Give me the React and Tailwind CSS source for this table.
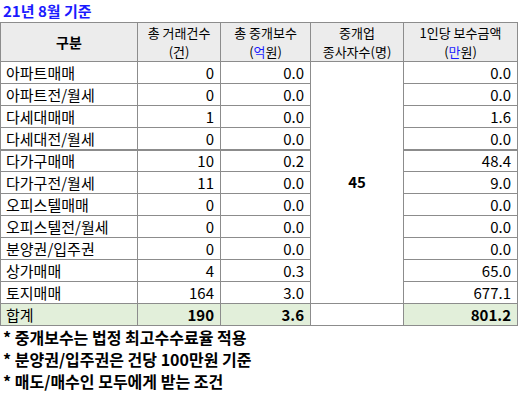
import React from "react";

const rows = [
  { name: "아파트매매", count: "0", fee: "0.0", per: "0.0" },
  { name: "아파트전/월세", count: "0", fee: "0.0", per: "0.0" },
  { name: "다세대매매", count: "1", fee: "0.0", per: "1.6" },
  { name: "다세대전/월세", count: "0", fee: "0.0", per: "0.0", thick: true },
  { name: "다가구매매", count: "10", fee: "0.2", per: "48.4" },
  { name: "다가구전/월세", count: "11", fee: "0.0", per: "9.0" },
  { name: "오피스텔매매", count: "0", fee: "0.0", per: "0.0" },
  { name: "오피스텔전/월세", count: "0", fee: "0.0", per: "0.0" },
  { name: "분양권/입주권", count: "0", fee: "0.0", per: "0.0" },
  { name: "상가매매", count: "4", fee: "0.3", per: "65.0" },
  { name: "토지매매", count: "164", fee: "3.0", per: "677.1" },
];

const notes = [
  "* 중개보수는 법정 최고수수료율 적용",
  "* 분양권/입주권은 건당 100만원 기준",
  "* 매도/매수인 모두에게 받는 조건",
];

export default function App() {
  const cell = "border border-[#8c8c8c] h-[22px] px-[5px] leading-none";
  const head = "border border-[#8c8c8c] p-0 text-[13px] font-normal leading-[19px]";

  return (
    <div className="w-[519px] h-[394px] bg-white text-black font-['Noto_Sans_CJK_KR',sans-serif]">
      {/* 제목 */}
      <div className="h-[22px] pl-[3px] pt-[1px] text-[15px] font-bold leading-[20px] text-[#1a1aff]">
        21년 8월 기준
      </div>

      {/* 표 */}
      <table className="border-collapse table-fixed w-[517px] text-[15px]">
        <colgroup>
          <col className="w-[137px]" />
          <col className="w-[83px]" />
          <col className="w-[90px]" />
          <col className="w-[93px]" />
          <col className="w-[114px]" />
        </colgroup>
        <thead>
          <tr className="bg-[#ececec] h-[38px]">
            <th className="border border-[#8c8c8c] p-0 text-[14px] font-bold">구분</th>
            <th className={head}>
              <div>총 거래건수</div>
              <div>(건)</div>
            </th>
            <th className={head}>
              <div>총 중개보수</div>
              <div>
                (<span className="text-[#1a1aff]">억</span>원)
              </div>
            </th>
            <th className={head}>
              <div>중개업</div>
              <div>종사자수(명)</div>
            </th>
            <th className={head}>
              <div>1인당 보수금액</div>
              <div>
                (<span className="text-[#1a1aff]">만</span>원)
              </div>
            </th>
          </tr>
        </thead>
        <tbody>
          {rows.map((r, i) => (
            <tr key={r.name} className={r.thick ? "border-b-2 border-[#8c8c8c]" : ""}>
              <td className={`${cell} text-left`}>{r.name}</td>
              <td className={`${cell} text-right pr-[6px]`}>{r.count}</td>
              <td className={`${cell} text-right pr-[6px]`}>{r.fee}</td>
              {i === 0 && (
                <td
                  rowSpan={rows.length}
                  className="border border-[#8c8c8c] text-center align-middle text-[15px] font-bold"
                >
                  45
                </td>
              )}
              <td className={`${cell} text-right pr-[6px]`}>{r.per}</td>
            </tr>
          ))}
          <tr className="font-bold">
            <td className={`${cell} text-left bg-[#e2efda] font-normal`}>합계</td>
            <td className={`${cell} text-right pr-[6px] bg-[#e2efda]`}>190</td>
            <td className={`${cell} text-right pr-[6px] bg-[#e2efda]`}>3.6</td>
            <td className={`${cell} bg-white`}></td>
            <td className={`${cell} text-right pr-[6px] bg-[#e2efda]`}>801.2</td>
          </tr>
        </tbody>
      </table>

      {/* 참고 사항 */}
      <div className="pl-[3px] flex flex-col text-[16px] font-bold leading-[22px]">
        {notes.map((n) => (
          <div key={n}>{n}</div>
        ))}
      </div>
    </div>
  );
}
